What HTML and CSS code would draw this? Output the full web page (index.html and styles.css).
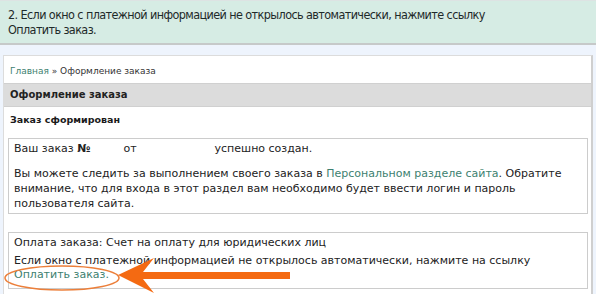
FILE: index.html
```html
<!DOCTYPE html>
<html lang="ru">
<head>
  <meta charset="UTF-8">
  <title>Оформление заказа</title>
  <link rel="stylesheet" href="styles.css">
</head>
<body>
  <div class="notice">
    2. Если окно с платежной информацией не открылось автоматически, нажмите ссылку<br>
    Оплатить заказ.
  </div>

  <div class="page">
    <div class="crumbs"><a href="#">Главная</a> &raquo; Оформление заказа</div>
    <div class="title">Оформление заказа</div>
    <div class="subtitle">Заказ сформирован</div>

    <div class="box">
      <p>Ваш заказ <b>№</b><span class="gap1"></span>от<span class="gap2"></span>успешно создан.</p>
      <p>Вы можете следить за выполнением своего заказа в <a href="#">Персональном разделе сайта</a>. Обратите внимание, что для входа в этот раздел вам необходимо будет ввести логин и пароль пользователя сайта.</p>
    </div>

    <div class="box pay">
      <p>Оплата заказа: Счет на оплату для юридических лиц</p>
      <p class="tight">Если окно с платежной информацией не открылось автоматически, нажмите на ссылку<br>
      <a href="#">Оплатить заказ.</a></p>
      <svg class="mark" width="300" height="40" viewBox="0 0 300 40">
        <ellipse cx="62" cy="23" rx="57" ry="12" fill="none" stroke="#ec7f3a" stroke-width="1.5"/>
        <polygon points="118,20 154,3 143,17 290,17 290,24 143,24 154,38" fill="#f46a12"/>
      </svg>
    </div>
  </div>
</body>
</html>
```

FILE: styles.css
```css
body {
  margin: 0;
  background: #eef4fd;
  font-family: "DejaVu Sans", Verdana, sans-serif;
  color: #222;
}
a {
  color: #3d7f70;
  text-decoration: none;
}
.notice {
  background: #d6ece4;
  border-top: 1px solid #dde3e3;
  border-bottom: 2px solid #c6c9c9;
  padding: 6px 8px 6px 8px;
  font-family: "DejaVu Sans Condensed", "DejaVu Sans", sans-serif;
  font-size: 12.5px;
  letter-spacing: -0.6px;
  line-height: 15px;
  color: #1e2a2a;
}
.page {
  margin: 10px 3px 0 3px;
  background: #fff;
  border: 1px solid #dcdcdc;
  border-right: 2px solid #cfcfcf;
  border-bottom: 2px solid #cfcfcf;
  padding-bottom: 5px;
}
.crumbs {
  padding: 9px 6px 5px 6px;
  font-size: 9px;
  line-height: 13px;
  color: #333;
}
.title {
  background: #dcdcdc;
  border-top: 1px solid #d0d0d0;
  border-bottom: 1px solid #d0d0d0;
  padding: 4px 6px;
  font-size: 10px;
  font-weight: bold;
  line-height: 14px;
  color: #222;
}
.subtitle {
  padding: 6px 6px 12px 6px;
  font-size: 9.5px;
  font-weight: bold;
  line-height: 13px;
  color: #1a1a1a;
}
.box {
  position: relative;
  margin: 0 3px 18px 4px;
  border: 1px solid #cccccc;
  padding: 2px 5px;
  font-size: 11px;
  line-height: 15px;
}
.box p {
  margin: 0 0 10px 0;
}
.box p:last-of-type {
  margin-bottom: 0;
}
.box.pay {
  margin-bottom: 0;
}
.box.pay p {
  margin-bottom: 4px;
}
.box .tight {
  line-height: 14px;
}
.gap1 {
  display: inline-block;
  width: 33px;
}
.gap2 {
  display: inline-block;
  width: 78px;
}
.mark {
  position: absolute;
  left: -9px;
  top: 22px;
}
```
